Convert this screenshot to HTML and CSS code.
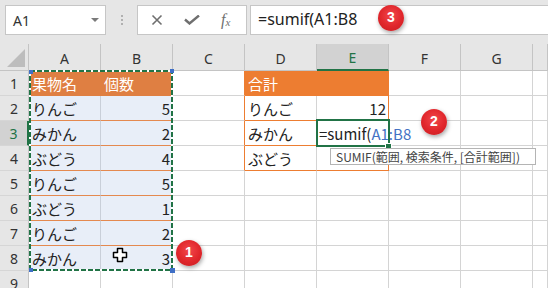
FILE: index.html
```html
<!DOCTYPE html>
<html lang="ja">
<head>
    <meta charset="UTF-8">
    <title>SUMIF</title>
    <link rel="stylesheet" href="styles.css">
</head>
<body>
    <div class="topbar">
        <div class="namebox"><span>A1</span><span class="dd"></span></div>
        <div class="grip"><i></i><i></i><i></i></div>
        <div class="btns">
            <svg width="12" height="12" viewBox="0 0 12 12"><path d="M1.5 1.5l9 9M10.5 1.5l-9 9" stroke="#6f6f6f" stroke-width="1.6" fill="none"/></svg>
            <svg width="16" height="10" viewBox="0 0 16 10"><path d="M1 4.5l4.5 4l9.5-8" stroke="#6f6f6f" stroke-width="2.4" fill="none"/></svg>
            <span class="fx">f<sub>x</sub></span>
        </div>
        <div class="formula">=sumif(A1:B8</div>
        <div class="badge b3">3</div>
    </div>

    <div class="sheet">
        <div class="c corner"><svg width="18" height="18" viewBox="0 0 18 18"><path d="M18 0V18H0z" fill="#bdbdbd"/></svg></div>
        <div class="c ch">A</div>
        <div class="c ch">B</div>
        <div class="c ch">C</div>
        <div class="c ch">D</div>
        <div class="c ch sel">E</div>
        <div class="c ch">F</div>
        <div class="c ch">G</div>
        <div class="c ch"></div>

        <div class="c rh">1</div>
        <div class="c hd">果物名</div>
        <div class="c hd">個数</div>
        <div class="c ore"></div>
        <div class="c hd2">合計</div>
        <div class="c hd2"></div>
        <div class="c"></div>
        <div class="c"></div>
        <div class="c"></div>

        <div class="c rh">2</div>
        <div class="c fill">りんご</div>
        <div class="c fill num">5</div>
        <div class="c ore"></div>
        <div class="c ob">りんご</div>
        <div class="c ob orr num">12</div>
        <div class="c"></div>
        <div class="c"></div>
        <div class="c"></div>

        <div class="c rh sel">3</div>
        <div class="c fill">みかん</div>
        <div class="c fill num">2</div>
        <div class="c ore"></div>
        <div class="c ob">みかん</div>
        <div class="c ob orr edit">=sumif(<span class="ref">A1:B8</span></div>
        <div class="c"></div>
        <div class="c"></div>
        <div class="c"></div>

        <div class="c rh">4</div>
        <div class="c fill">ぶどう</div>
        <div class="c fill num">4</div>
        <div class="c ore"></div>
        <div class="c ob">ぶどう</div>
        <div class="c ob orr"></div>
        <div class="c"></div>
        <div class="c"></div>
        <div class="c"></div>

        <div class="c rh">5</div>
        <div class="c fill">りんご</div>
        <div class="c fill num">5</div>
        <div class="c"></div>
        <div class="c"></div>
        <div class="c"></div>
        <div class="c"></div>
        <div class="c"></div>
        <div class="c"></div>

        <div class="c rh">6</div>
        <div class="c fill">ぶどう</div>
        <div class="c fill num">1</div>
        <div class="c"></div>
        <div class="c"></div>
        <div class="c"></div>
        <div class="c"></div>
        <div class="c"></div>
        <div class="c"></div>

        <div class="c rh">7</div>
        <div class="c fill">りんご</div>
        <div class="c fill num">2</div>
        <div class="c"></div>
        <div class="c"></div>
        <div class="c"></div>
        <div class="c"></div>
        <div class="c"></div>
        <div class="c"></div>

        <div class="c rh">8</div>
        <div class="c fill">みかん</div>
        <div class="c fill num">3</div>
        <div class="c"></div>
        <div class="c"></div>
        <div class="c"></div>
        <div class="c"></div>
        <div class="c"></div>
        <div class="c"></div>

        <div class="c rh">9</div>
        <div class="c"></div>
        <div class="c"></div>
        <div class="c"></div>
        <div class="c"></div>
        <div class="c"></div>
        <div class="c"></div>
        <div class="c"></div>
        <div class="c"></div>

        <!-- copy range A1:B8 -->
        <svg class="ants" width="145" height="203" viewBox="0 0 145 203">
            <rect x="1" y="1" width="142" height="199" fill="none" stroke="#fff" stroke-width="2"/>
            <rect x="1" y="1" width="142" height="199" fill="none" stroke="#217346" stroke-width="2" stroke-dasharray="5 2"/>
        </svg>
        <span class="mk m1"></span>
        <span class="mk m2"></span>
        <span class="mk m3"></span>
        <span class="mk m4"></span>

        <div class="active"></div>
        <div class="handle"></div>
        <div class="tip">SUMIF(範囲, 検索条件, [合計範囲])</div>

        <svg class="cursor" width="16" height="16" viewBox="0 0 16 16"><path d="M5.5 1.5h5v4h4v5h-4v4h-5v-4h-4v-5h4z" fill="#fff" stroke="#000" stroke-width="1.5" stroke-linejoin="round"/></svg>

        <div class="badge b1">1</div>
        <div class="badge b2">2</div>
    </div>
</body>
</html>
```

FILE: styles.css
```css
body {
    margin: 0;
    width: 548px;
    height: 288px;
    overflow: hidden;
    background-color: #fff;
    font-family: "Noto Sans CJK JP", "Noto Sans", sans-serif;
}

/* formula bar */
.topbar {
    position: relative;
    display: flex;
    align-items: flex-start;
    height: 44px;
    padding: 5px 0 0 5px;
    box-sizing: border-box;
    background-color: #e6e6e6;
}

.namebox {
    width: 101px;
    height: 30px;
    box-sizing: border-box;
    display: flex;
    align-items: center;
    justify-content: space-between;
    padding: 0 6px 0 7px;
    background-color: #fff;
    border: 1px solid #c6c6c6;
    font-family: "Noto Sans", sans-serif;
    font-size: 14px;
    color: #333;
}

.dd {
    border-left: 4px solid transparent;
    border-right: 4px solid transparent;
    border-top: 4px solid #7a7a7a;
}

.grip {
    width: 31px;
    height: 30px;
    display: flex;
    flex-direction: column;
    align-items: center;
    justify-content: center;
    gap: 2px;
}

.grip i {
    width: 2px;
    height: 2px;
    background-color: #b0b0b0;
}

.btns {
    width: 110px;
    height: 30px;
    box-sizing: border-box;
    display: flex;
    align-items: center;
    gap: 21px;
    padding-left: 13px;
    margin-right: 3px;
    background-color: #fff;
    border: 1px solid #c6c6c6;
}

.fx {
    font-family: "Liberation Serif", serif;
    font-style: italic;
    font-size: 16px;
    color: #6f6f6f;
    line-height: 1;
}

.fx sub {
    font-size: 11px;
    vertical-align: -1px;
}

.formula {
    flex: 1;
    height: 30px;
    box-sizing: border-box;
    padding-left: 7px;
    background-color: #fff;
    border: 1px solid #c6c6c6;
    border-right: none;
    font-family: "Noto Sans", sans-serif;
    font-size: 16px;
    line-height: 27px;
    color: #222;
}

/* grid */
.sheet {
    position: relative;
    display: grid;
    grid-template-columns: 29px repeat(7, 72px) 1fr;
    grid-template-rows: 27px repeat(9, 25px);
}

.c {
    box-sizing: border-box;
    display: flex;
    align-items: center;
    padding: 0 3px;
    border-right: 1px solid #d4d4d4;
    border-bottom: 1px solid #d4d4d4;
    font-size: 15px;
    color: #222;
    white-space: nowrap;
}

.corner {
    align-items: flex-end;
    justify-content: flex-end;
    padding: 0 3px 3px 0;
    background-color: #e6e6e6;
    border-right-color: #c4c4c4;
    border-bottom-color: #c4c4c4;
}

.ch {
    justify-content: center;
    padding-top: 2px;
    background-color: #e6e6e6;
    border-right-color: #c4c4c4;
    border-bottom-color: #c4c4c4;
    font-family: "Noto Sans", sans-serif;
    font-size: 14px;
    color: #333;
}

.ch.sel {
    background-color: #d2d2d2;
    border-bottom: 2px solid #217346;
    color: #217346;
}

.rh {
    justify-content: center;
    background-color: #e6e6e6;
    border-right-color: #c4c4c4;
    border-bottom-color: #d6d6d6;
    font-family: "Noto Sans", sans-serif;
    font-size: 14px;
    color: #333;
}

.rh.sel {
    background-color: #d2d2d2;
    border-right: 2px solid #217346;
    color: #217346;
}

.hd {
    background-color: #df7f42;
    border-color: #df7f42;
    color: #fff;
}

.hd2 {
    background-color: #ed7d31;
    border-color: #ed7d31;
    color: #fff;
}

.fill {
    background-color: #e8eef8;
    border-right-color: #c9cfd9;
    border-bottom-color: #e4894f;
}

.num {
    justify-content: flex-end;
    padding-right: 2px;
}

.ore {
    border-right-color: #ed7d31;
}

.orr {
    border-right-color: #ed7d31;
}

.ob {
    border-bottom-color: #ed7d31;
}

.edit {
    padding-left: 2px;
    overflow: visible;
}

.ref {
    color: #4472c4;
}

/* overlays */
.ants {
    position: absolute;
    left: 29px;
    top: 26px;
}

.mk {
    position: absolute;
    width: 4px;
    height: 4px;
    background-color: #3f6fc6;
}

.m1 { left: 29px; top: 26px; }
.m2 { left: 170px; top: 25px; }
.m3 { left: 29px; top: 224px; }
.m4 { left: 170px; top: 224px; width: 5px; height: 5px; }

.active {
    position: absolute;
    left: 316px;
    top: 75px;
    width: 74px;
    height: 28px;
    box-sizing: border-box;
    border: 2px solid #217346;
}

.handle {
    position: absolute;
    left: 385px;
    top: 99px;
    width: 5px;
    height: 5px;
    background-color: #217346;
    border: 1px solid #fff;
}

.tip {
    position: absolute;
    left: 330px;
    top: 104px;
    width: 206px;
    height: 17px;
    box-sizing: border-box;
    padding: 0 5px;
    background-color: #fff;
    border: 1px solid #b4b4b4;
    font-size: 12px;
    line-height: 15px;
    color: #444;
    white-space: nowrap;
}

.cursor {
    position: absolute;
    left: 112px;
    top: 203px;
}

.badge {
    position: absolute;
    width: 26px;
    height: 26px;
    border-radius: 50%;
    background: radial-gradient(circle at 50% 40%, #f2474b 0, #e0262b 55%, #c41d22 100%);
    box-shadow: 1px 2px 4px rgba(0, 0, 0, 0.35);
    color: #fff;
    font-family: "Liberation Sans", sans-serif;
    font-weight: bold;
    font-size: 14px;
    line-height: 25px;
    text-align: center;
}

.b1 { left: 176px; top: 196px; }
.b2 { left: 421px; top: 65px; }
.b3 { left: 378px; top: 5px; }
```
